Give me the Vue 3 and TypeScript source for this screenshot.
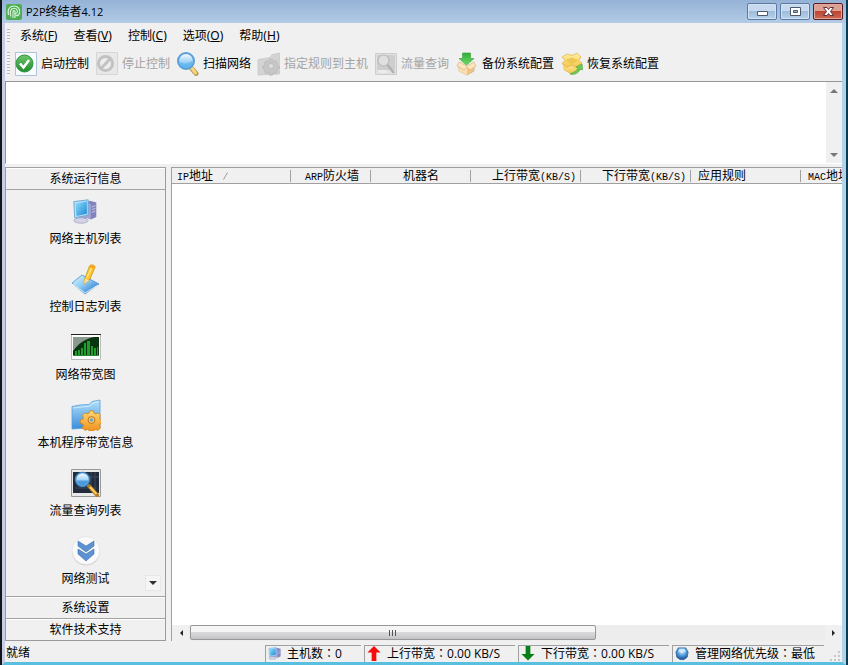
<script setup lang="ts">
import { ref } from 'vue'

interface MenuEntry { label: string; key: string }
interface ToolEntry { label: string; icon: string; disabled?: boolean }
interface SideEntry { label: string; icon: string }
interface Column { latin?: string; text: string; tail?: string; cls: string; sorted?: boolean }
interface StatusEntry { icon: string; label: string; value: string; cls: string }

const menus: MenuEntry[] = [
  { label: '系统', key: 'F' },
  { label: '查看', key: 'V' },
  { label: '控制', key: 'C' },
  { label: '选项', key: 'O' },
  { label: '帮助', key: 'H' },
]

const tools: ToolEntry[] = [
  { label: '启动控制', icon: 'start' },
  { label: '停止控制', icon: 'stop', disabled: true },
  { label: '扫描网络', icon: 'scan' },
  { label: '指定规则到主机', icon: 'rule', disabled: true },
  { label: '流量查询', icon: 'query-off', disabled: true },
  { label: '备份系统配置', icon: 'backup' },
  { label: '恢复系统配置', icon: 'restore' },
]

const sideItems: SideEntry[] = [
  { label: '网络主机列表', icon: 'host' },
  { label: '控制日志列表', icon: 'log' },
  { label: '网络带宽图', icon: 'chart' },
  { label: '本机程序带宽信息', icon: 'folder' },
  { label: '流量查询列表', icon: 'query' },
  { label: '网络测试', icon: 'test' },
]

const columns: Column[] = [
  { latin: 'IP', text: '地址', cls: 'c-ip', sorted: true },
  { latin: 'ARP', text: '防火墙', cls: 'c-arp' },
  { text: '机器名', cls: 'c-name' },
  { text: '上行带宽', tail: '(KB/S)', cls: 'c-rate' },
  { text: '下行带宽', tail: '(KB/S)', cls: 'c-rate' },
  { text: '应用规则', cls: 'c-rule' },
  { latin: 'MAC', text: '地址', cls: 'c-mac' },
]

const statuses: StatusEntry[] = [
  { icon: 'host', label: '主机数', value: '0', cls: 's-host' },
  { icon: 'up', label: '上行带宽', value: '0.00 KB/S', cls: 's-rate' },
  { icon: 'down', label: '下行带宽', value: '0.00 KB/S', cls: 's-rate' },
  { icon: 'globe', label: '管理网络优先级', value: '最低', cls: 's-level' },
]

const logText = ref('')
</script>

<template>
  <div class="window">
    <svg class="defs" aria-hidden="true">
      <defs>
        <linearGradient id="g-green" x1="0" y1="0" x2="0" y2="1"><stop offset="0" stop-color="#6cc56a" /><stop offset="1" stop-color="#1f8c2c" /></linearGradient>
        <linearGradient id="g-arrow" x1="0" y1="0" x2="0" y2="1"><stop offset="0" stop-color="#2fae3a" /><stop offset="1" stop-color="#6fdc62" /></linearGradient>
        <linearGradient id="g-blue" x1="0" y1="0" x2="1" y2="1"><stop offset="0" stop-color="#8fe0fb" /><stop offset="1" stop-color="#1c86d6" /></linearGradient>
        <linearGradient id="g-lens" x1="0" y1="0" x2="0" y2="1"><stop offset="0" stop-color="#ffffff" /><stop offset=".5" stop-color="#a8d6f6" /><stop offset="1" stop-color="#5fb0ea" /></linearGradient>
        <linearGradient id="g-violet" x1="0" y1="0" x2="1" y2="1"><stop offset="0" stop-color="#d7d6ef" /><stop offset="1" stop-color="#6668a8" /></linearGradient>
        <linearGradient id="g-page" x1="0" y1="0" x2="1" y2="1"><stop offset="0" stop-color="#e2f6ff" /><stop offset=".45" stop-color="#8fcdf3" /><stop offset="1" stop-color="#1560c0" /></linearGradient>
        <linearGradient id="g-folder" x1="0" y1="0" x2="0" y2="1"><stop offset="0" stop-color="#b4e2fb" /><stop offset="1" stop-color="#3b8cdc" /></linearGradient>
        <linearGradient id="g-gold" x1="0" y1="0" x2="0" y2="1"><stop offset="0" stop-color="#ffd873" /><stop offset="1" stop-color="#ee8d16" /></linearGradient>
        <linearGradient id="g-box" x1="0" y1="0" x2="0" y2="1"><stop offset="0" stop-color="#fff1a3" /><stop offset="1" stop-color="#f3c44a" /></linearGradient>
        <radialGradient id="g-globe" cx=".5" cy=".3" r=".7"><stop offset="0" stop-color="#d6f0ff" /><stop offset=".5" stop-color="#579edc" /><stop offset="1" stop-color="#124b91" /></radialGradient>
        <path id="gear-shape" d="M-1.8-8.5h3.6l.6 2.2 1.6.7 2-1.1 2.500 2.500-1.100 2 .7 1.600 2.200.6v3l-2.200.6-.7 1.600 1.100 2-2.500 2.500-2-1.100-1.600.7-.6 2.200h-3.600l-.6-2.200-1.600-.7-2 1.100-2.500-2.500 1.100-2-.7-1.600-2.200-.6v-3l2.200-.6.7-1.600-1.100-2 2.500-2.500 2 1.100 1.600-.7z" />
      </defs>
      <symbol id="i-app" viewBox="0 0 16 16">
        <rect width="16" height="16" rx="2" fill="#4fae55" />
        <g fill="none" stroke="#dcf5dc" stroke-width="1.100">
          <path d="M2.500 11C1 5 4 2 8 2s6.500 3.500 5.500 7c-.5 2-2 3-4 2.500" />
          <path d="M4.800 12.500C3.500 7 5 4.300 8 4.300c3 0 4.200 3 2.800 4.700-.6.7-1.300.7-2 .5" />
          <path d="M7 14V8.200c0-2 2-2 2-.4V14" />
        </g>
      </symbol>
      <symbol id="i-start" viewBox="0 0 24 24">
        <path d="M1.500.5h21v23h-21z" fill="#f8fbff" stroke="#adc3dc" />
        <circle cx="10.500" cy="11.500" r="8.500" fill="url(#g-green)" stroke="#2e9340" />
        <path d="M6 11.500l3.500 4L15 8" fill="none" stroke="#fff" stroke-width="2.600" />
      </symbol>
      <symbol id="i-stop" viewBox="0 0 24 24">
        <path d="M1.500.5h21v22h-21z" fill="#e8e8e8" stroke="#d6d6d6" />
        <circle cx="10.500" cy="11.500" r="7" fill="#ededed" stroke="#c2c2c2" stroke-width="3" />
        <path d="M6 16.500L15.500 6.500" stroke="#c2c2c2" stroke-width="3" />
      </symbol>
      <symbol id="i-scan" viewBox="0 0 24 24">
        <path d="M14.500 15l5.500 6.500" stroke="#b99a58" stroke-width="5" stroke-linecap="round" />
        <path d="M15 15l4.500 6" stroke="#f5d67a" stroke-width="3" stroke-linecap="round" />
        <circle cx="10" cy="9" r="8" fill="url(#g-lens)" stroke="#5b9dd6" stroke-width="2" />
        <path d="M3.500 9.500c2 2.500 9 3 13-1 .5 10-12 10-13 1z" fill="#57b4ef" opacity=".7" />
      </symbol>
      <symbol id="i-rule" viewBox="0 0 24 24">
        <path d="M1 7.500l12-2 2-3L22.500 1v21L1 23z" fill="#d3d3d3" stroke="#c6c6c6" stroke-width=".7" />
        <use href="#gear-shape" transform="translate(14 14) scale(.8)" fill="#c6c6c6" stroke="#b5b5b5" stroke-width=".8" />
        <circle cx="14" cy="14" r="2.500" fill="#dedede" stroke="#b5b5b5" stroke-width=".7" />
      </symbol>
      <symbol id="i-query-off" viewBox="0 0 24 24">
        <path d="M1.500 1.500h21v21h-21z" fill="#e1e1e1" stroke="#cdcdcd" />
        <path d="M3 3h18v15H3z" fill="#cecece" />
        <circle cx="9.500" cy="8.500" r="5.500" fill="#e0e0e0" stroke="#bababa" stroke-width="1.200" />
        <path d="M13.500 13l6.500 8" stroke="#b0b0b0" stroke-width="2.500" />
        <path d="M4 18h8l2 3H5z" fill="#ececec" />
      </symbol>
      <symbol id="i-backup" viewBox="0 0 24 24">
        <path d="M4 12l8 3 7-3v7l-7 4-8-4z" fill="#eec68c" stroke="#d9a968" stroke-width=".7" />
        <path d="M4 12l8 3v8l-8-4z" fill="#f9dfaf" />
        <path d="M4 10L2 14l7 4 3-3 3 3 6-4-2-4-7 4z" fill="#fbe6c0" stroke="#dcb07a" stroke-width=".7" />
        <path d="M7.500 1h8v5.500h3.500L11.500 13 4 6.500h3.500z" fill="url(#g-arrow)" stroke="#3fa742" stroke-width=".7" />
      </symbol>
      <symbol id="i-restore" viewBox="0 0 24 24">
        <path d="M4 10l9 4 8-4v7l-9 5.500-8-5z" fill="url(#g-box)" stroke="#dfb04a" stroke-width=".7" />
        <path d="M2 5l5-3 5 1.500L17 1l4 4-2 3.500 3 3-7 4-3-3-5 3-5-4 3-3z" fill="url(#g-box)" stroke="#dfb04a" stroke-width=".7" />
        <path d="M5 8.500l6.500-3 7 3-6.500 3.500z" fill="#f0c652" />
        <path d="M10 22c5 1 9-1 10-5l2.500 1-.5-6-6 3 2 1c-1 3-4 4-8 6z" fill="#6ccb55" stroke="#49a13c" stroke-width=".6" />
      </symbol>
      <symbol id="i-host" viewBox="0 0 30 30">
        <path d="M15 5l5-2 7 2v16l-6 3-6-3z" fill="#8283bd" />
        <path d="M15 5l6 2v17l-6-3z" fill="#a3a3d2" />
        <path d="M22 10l4-1.500M22 13l4-1.500M22 16l4-1.500" stroke="#c9c9ee" />
        <path d="M8 20h7l2 4-9 3-4-3z" fill="url(#g-violet)" />
        <ellipse cx="10" cy="25" rx="8" ry="3" fill="#d3d3e7" stroke="#9696b7" stroke-width=".7" />
        <path d="M2 4l16-2v17L3 22z" fill="#b9dcf5" stroke="#6aa6d5" />
        <path d="M4 6l12.500-2v13.500L5 20z" fill="url(#g-blue)" />
      </symbol>
      <symbol id="i-log" viewBox="0 0 30 32">
        <path d="M1 20l10-8 17 9-14 10z" fill="url(#g-page)" stroke="#4b94cf" stroke-width=".8" />
        <path d="M2 21l12 9 13-8" fill="none" stroke="#d2efff" />
        <path d="M13 21l1-6L18.500 3C20 1 24.500 2 24 4.500L18.500 17z" fill="#fbc52c" stroke="#d58e14" stroke-width=".8" />
        <path d="M18.500 3C20 1 24.500 2 24 4.500L23.500 6l-5-2z" fill="#f4a71c" />
        <path d="M13 21l1-5.500 4 2z" fill="#f5dfb4" /><path d="M16 14.500L20.500 5" stroke="#ffeb91" stroke-width="1.300" />
      </symbol>
      <symbol id="i-chart" viewBox="0 0 30 26">
        <path d="M.5.5h29v25H.5z" fill="#fff" stroke="#bbb" /><path d="M0 .5h30" stroke="#222" />
        <path d="M2 3h26v18H2z" fill="#08350f" /><path d="M2 3h21C14 5 8 9 2 17z" fill="#8b9a8f" />
        <path d="M4 21v-4h2v4zM7 21v-5h2v5zM10 21v-7h2v7zM13 21V9h2v12zM16 21V7h3v14zM20 21v-9h2v9zM23 21v-7h2v7zM26 21v-8h1v8z" fill="#1f9e2c" />
        <path d="M2 21.500h26" stroke="#2d8a37" />
      </symbol>
      <symbol id="i-folder" viewBox="0 0 30 32">
        <path d="M1 7.500l8-1.500 9-.5 3-3L29 1v27L1 30z" fill="url(#g-folder)" stroke="#5b9fd5" stroke-width=".8" />
        <path d="M2 9l17-2 3-3 6-1.500" fill="none" stroke="#dbf3ff" stroke-width=".8" />
        <use href="#gear-shape" transform="translate(20.500 21) scale(1.080)" fill="url(#g-gold)" stroke="#ce8219" stroke-width=".8" />
        <circle cx="20.500" cy="21" r="3.500" fill="#ecca7d" stroke="#bd7516" /><circle cx="20.500" cy="21" r="1.700" fill="#74a1bd" />
      </symbol>
      <symbol id="i-query" viewBox="0 0 30 28">
        <path d="M.5.500h29v27H.5z" fill="#e9e9e9" stroke="#9a9a9a" />
        <path d="M2 3h26v21H2z" fill="#222b3b" /><path d="M17 8h11M20 3v20M24 3v20M4 19h22" stroke="#3c485b" />
        <path d="M18 17l8 9" stroke="#b27b22" stroke-width="4" stroke-linecap="round" /><path d="M19 18l6.500 7" stroke="#ffd05c" stroke-width="2" />
        <circle cx="11.500" cy="10.500" r="7" fill="url(#g-lens)" stroke="#3986c8" stroke-width="1.500" />
        <path d="M5.500 11.500h12c-1 5-9 7-12 0z" fill="#2e7fc9" opacity=".65" />
      </symbol>
      <symbol id="i-test" viewBox="0 0 30 30">
        <circle cx="15" cy="15.500" r="14" fill="#cecece" /><circle cx="15" cy="14.500" r="14" fill="#fafafa" stroke="#dedede" stroke-width=".7" />
        <path d="M7 5l8 5 8-5v5l-8 6-8-6z" fill="#5d92d2" stroke="#3c6eac" stroke-width=".6" />
        <path d="M7 13l8 5 8-5v5l-8 7-8-7z" fill="#5d92d2" stroke="#3c6eac" stroke-width=".6" />
      </symbol>
      <symbol id="i-up" viewBox="0 0 16 16"><path d="M8 0l7 7h-4.500v9h-5V7H1z" fill="#f40d0d" /></symbol>
      <symbol id="i-down" viewBox="0 0 16 16"><path d="M5.500 0h5v8.500H15l-7 7-7-7h4.500z" fill="#087f16" /></symbol>
      <symbol id="i-globe" viewBox="0 0 16 16">
        <path d="M4 2h8l2.500 4.500-1 5.500L10 14.500H6L2.500 12l-1-5.500z" fill="url(#g-globe)" stroke="#245f9e" stroke-width=".8" />
        <path d="M5 3h6l1 3-4 1.500L4 6z" fill="#d7f0ff" opacity=".75" />
      </symbol>
    </svg>

    <header class="titlebar">
      <svg class="app-icon" aria-hidden="true"><use href="#i-app" /></svg>
      <h1><span class="small">P2P</span>终结者<span class="small">4.12</span></h1>
      <div class="captions">
        <button type="button" aria-label="最小化"><svg viewBox="0 0 28 15"><path d="M9.500 7.500h10v4h-10z" fill="#fff" stroke="#4c5a6b" /></svg></button>
        <button type="button" aria-label="最大化"><svg viewBox="0 0 28 15"><path d="M9.500 3.500h10v8h-10z" fill="#fff" stroke="#4c5a6b" /><path d="M12.500 6.500h4v2h-4z" fill="#9bb7d3" stroke="#4c5a6b" /></svg></button>
        <button type="button" class="close" aria-label="关闭"><svg viewBox="0 0 28 15"><path d="M9.500 3.500H13l1.500 2 1.500-2h3.500l-3 4 3 4H16l-1.500-2-1.500 2H9.500l3-4z" fill="#fff" stroke="#5b3337" /></svg></button>
      </div>
    </header>

    <div class="client">
      <nav class="menubar">
        <span class="gripper"></span>
        <button v-for="m in menus" :key="m.key" type="button">{{ m.label }}<span class="hot">(<u>{{ m.key }}</u>)</span></button>
      </nav>

      <div class="toolbar" role="toolbar">
        <span class="gripper"></span>
        <button v-for="t in tools" :key="t.icon" type="button" :disabled="t.disabled">
          <svg aria-hidden="true"><use :href="`#i-${t.icon}`" /></svg>
          <span>{{ t.label }}</span>
        </button>
      </div>

      <section class="log">
        <textarea v-model="logText" readonly aria-label="日志"></textarea>
        <div class="vscroll">
          <button type="button" aria-label="向上滚动"><svg viewBox="0 0 8 4"><path d="M4 0l4 4H0z" /></svg></button>
          <button type="button" aria-label="向下滚动"><svg viewBox="0 0 8 4"><path d="M0 0h8L4 4z" /></svg></button>
        </div>
      </section>

      <main class="main">
        <aside class="sidebar">
          <button type="button" class="group first">系统运行信息</button>
          <div class="items">
            <button v-for="s in sideItems" :key="s.icon" type="button" class="item">
              <svg :class="`pic-${s.icon}`" aria-hidden="true"><use :href="`#i-${s.icon}`" /></svg>
              <span>{{ s.label }}</span>
            </button>
            <button type="button" class="more" aria-label="向下滚动"><svg viewBox="0 0 8 4"><path d="M0 0h8L4 4z" /></svg></button>
          </div>
          <button type="button" class="group">系统设置</button>
          <button type="button" class="group">软件技术支持</button>
        </aside>

        <section class="list">
          <div class="table-wrap">
            <table>
              <thead>
                <tr>
                  <th v-for="(c, i) in columns" :key="i" :class="c.cls" scope="col">
                    <span v-if="c.latin" class="latin">{{ c.latin }}</span>{{ c.text }}<span v-if="c.tail" class="latin">{{ c.tail }}</span>
                    <svg v-if="c.sorted" class="sort" viewBox="0 0 5 8"><path d="M.5 7.500L4.500.5" stroke="#999" /></svg>
                  </th>
                </tr>
              </thead>
              <tbody></tbody>
            </table>
          </div>
          <div class="hscroll">
            <button type="button" aria-label="向左滚动"><svg viewBox="0 0 4 8"><path d="M4 1v6L1 4z" /></svg></button>
            <div class="track"><div class="thumb"><i></i><i></i><i></i></div></div>
            <button type="button" aria-label="向右滚动"><svg viewBox="0 0 4 8"><path d="M0 1l3 3-3 3z" /></svg></button>
          </div>
        </section>
      </main>

      <footer class="status">
        <span class="ready">就绪</span>
        <div v-for="s in statuses" :key="s.label" class="cell" :class="s.cls">
          <svg aria-hidden="true"><use :href="`#i-${s.icon}`" /></svg>
          <span>{{ s.label }}<span class="colon">：</span>{{ s.value }}</span>
        </div>
        <svg class="sizer" viewBox="0 0 12 12" aria-hidden="true"><path d="M9 1h2v2H9zM5 5h2v2H5zM9 5h2v2H9zM1 9h2v2H1zM5 9h2v2H5zM9 9h2v2H9z" fill="#c8c8c8" /></svg>
      </footer>
    </div>
  </div>
</template>

<style>
body { margin: 0; overflow: hidden; }
</style>

<style scoped>
.window {
  box-sizing: border-box;
  height: 100vh;
  display: flex;
  flex-direction: column;
  border-left: 2px solid #11151c;
  border-right: 2px solid #0d3a50;
  background: #f0f0f0;
  color: #000;
  font: 12px/16px "Open Sans", "Noto Sans CJK SC", sans-serif;
}
.window * { box-sizing: border-box; }
.defs { position: absolute; width: 0; height: 0; }
svg { display: block; flex: none; }
button { margin: 0; padding: 0; border: 0; background: none; color: inherit; font: inherit; white-space: nowrap; }

.titlebar {
  flex: none;
  height: 23px;
  display: flex;
  align-items: center;
  gap: 4px;
  padding-left: 4px;
  background: linear-gradient(#94b2d6, #b3cbe6);
}
.app-icon { width: 16px; height: 16px; }
h1 { flex: 1; margin: 0; font-size: 12px; font-weight: 400; }
.small { font-size: 11px; }
.captions { display: flex; align-self: flex-start; gap: 3px; padding: 3px 3px 0 0; }
.captions button {
  width: 30px;
  height: 17px;
  border: 1px solid #5d7ba2;
  border-radius: 2px;
  background: linear-gradient(#c6d9ee 45%, #9dbbdb 50%, #b8d2ea);
  box-shadow: inset 0 0 0 1px #d3e3f3;
}
.captions svg { width: 28px; height: 15px; }
.captions .close { border-color: #5a1e24; background: linear-gradient(#dda093 45%, #bd4433 50%, #cc6a55); box-shadow: inset 0 0 0 1px #e0a89e; }

.client {
  flex: 1;
  min-height: 0;
  display: flex;
  flex-direction: column;
  border: solid;
  border-width: 0 4px 3px 3px;
  border-color: #b3d3ea #b3d3ea #58bfe0 #c9cde4;
}

.menubar { flex: none; display: flex; align-items: center; height: 24px; padding: 1px 0 0 2px; }
.gripper { flex: none; width: 3px; background: repeating-linear-gradient(#b5b5b5 0 1px, #f7f7f7 1px 3px); }
.menubar .gripper { height: 14px; margin-right: 2px; }
.menubar button { padding: 0 8px; }
.hot { font-family: "Noto Sans", sans-serif; }

.toolbar { flex: none; display: flex; align-items: center; gap: 6px; height: 34px; padding-left: 2px; }
.toolbar .gripper { height: 24px; margin-right: -2px; }
.toolbar button { display: flex; align-items: center; gap: 3px; }
.toolbar button:disabled { color: #a3a3a3; }
.toolbar svg { width: 24px; height: 24px; }

.log { flex: none; display: flex; height: 83px; border-top: 1px solid #959595; border-left: 1px solid #959595; border-bottom: 1px solid #fff; background: #fff; }
.log textarea { flex: 1; min-width: 0; padding: 2px; border: 0; outline: 0; resize: none; background: #fff; font: inherit; }
.vscroll { flex: none; width: 16px; display: flex; flex-direction: column; justify-content: space-between; background: #f0f0f0; }
.vscroll button { height: 17px; display: flex; align-items: center; justify-content: center; }
.vscroll svg, .more svg { width: 8px; height: 4px; fill: #777; }

.main { flex: 1; min-height: 0; display: flex; gap: 5px; padding-top: 3px; }
.sidebar { flex: none; width: 161px; display: flex; flex-direction: column; border: 1px solid #9b9b9b; border-top: 0; }
.group { flex: none; height: 22px; border-top: 1px solid #a3a3a3; box-shadow: inset 0 1px #fff; }
.group.first { height: 23px; border-bottom: 1px solid #a3a3a3; }
.items { position: relative; flex: 1; min-height: 0; display: flex; flex-direction: column; padding-top: 1px; }
.item { height: 68px; flex: none; display: grid; grid-template-rows: 40px 16px; justify-items: center; align-items: center; }
.item svg { width: 30px; height: 30px; }
.item .pic-host { width: 27px; height: 27px; }
.item .pic-log, .item .pic-folder { height: 32px; }
.item .pic-chart { height: 26px; }
.item .pic-query { height: 28px; }
.more { position: absolute; right: 4px; bottom: 5px; width: 16px; height: 16px; display: flex; align-items: center; justify-content: center; background: #f5f5f5; border: 1px solid #e7e7e7; }
.more svg { fill: #333; }

.list { flex: 1; min-width: 0; display: flex; flex-direction: column; border-top: 1px solid #a0a0a0; border-left: 1px solid #a0a0a0; background: #fff; }
.table-wrap { flex: 1; min-height: 0; overflow: hidden; }
table { width: 760px; table-layout: fixed; border-collapse: separate; border-spacing: 0; }
th {
  height: 16px;
  padding: 0 5px;
  border-bottom: 1px solid #a0a0a0;
  background: linear-gradient(#a0a0a0, #a0a0a0) right center / 1px 12px no-repeat #f0f0f0;
  font-weight: 400;
  line-height: 15px;
  text-align: left;
  white-space: nowrap;
}
.latin { font-family: "Liberation Mono", monospace; font-size: 10px; line-height: 1px; }
.sort { display: inline-block; width: 5px; height: 8px; margin-left: 10px; }
.c-ip { width: 119px; }
.c-arp { width: 80px; padding-right: 12px; text-align: right; }
.c-name { width: 100px; text-align: center; }
.c-rate { width: 110px; text-align: right; }
.c-rule { width: 110px; padding-left: 7px; }
.c-mac { padding-left: 7px; }

.hscroll { flex: none; display: flex; height: 16px; background: #f0f0f0; }
.hscroll button { width: 17px; display: flex; align-items: center; justify-content: center; }
.hscroll svg { width: 4px; height: 8px; fill: #222; }
.track { flex: 1; padding: 0 1px; background: #ededed; }
.thumb { width: 64%; height: 15px; display: flex; align-items: center; justify-content: center; gap: 2px; border: 1px solid #979797; border-radius: 2px; background: linear-gradient(#f5f5f5 45%, #dadadc 50%, #c4c4c8); }
.thumb i { width: 1px; height: 6px; background: #555; }

.status { flex: none; display: flex; align-items: center; gap: 3px; height: 21px; padding-top: 3px; }
.ready { flex: 1; padding-left: 1px; }
.cell { height: 17px; display: flex; align-items: center; gap: 5px; padding-left: 1px; border-top: 1px solid #a0a0a0; border-left: 1px solid #a0a0a0; white-space: nowrap; }
.cell svg { width: 16px; height: 15px; }
.s-host { width: 96px; padding-left: 2px; }
.s-host svg { width: 14px; }
.s-rate { width: 151px; }
.s-level { width: 152px; }
.colon { font-family: "Noto Sans CJK TC", sans-serif; }
.sizer { width: 12px; height: 12px; margin: 0 1px 0 2px; align-self: flex-end; }
</style>
